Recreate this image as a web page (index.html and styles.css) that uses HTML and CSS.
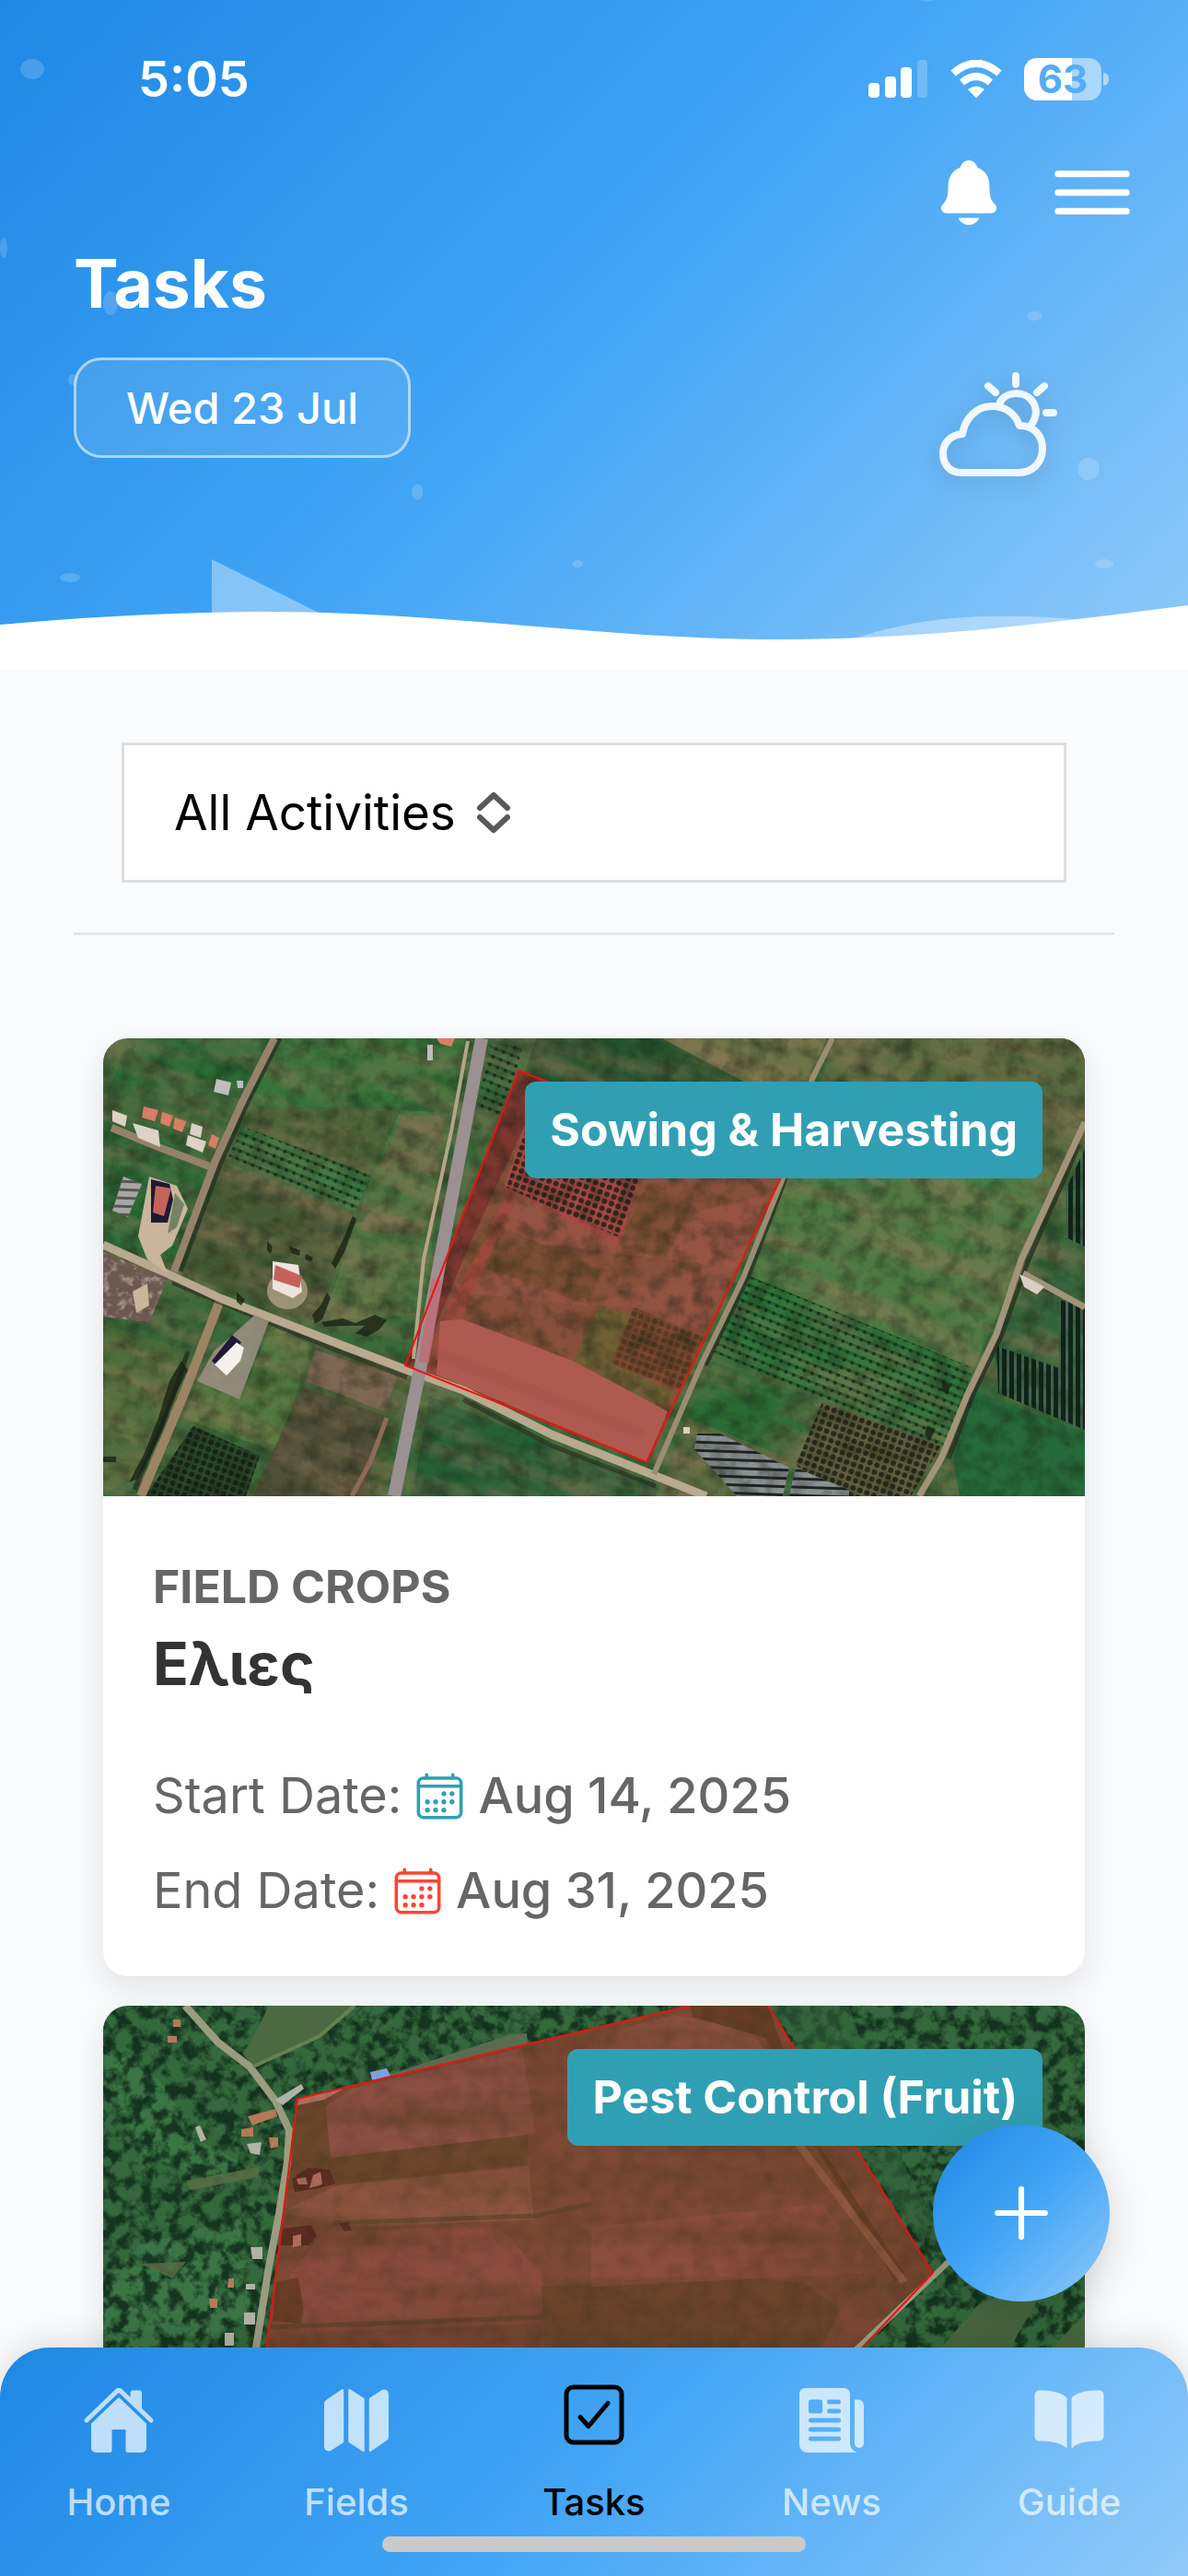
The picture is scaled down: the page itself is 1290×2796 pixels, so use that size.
FILE: index.html
```html
<!DOCTYPE html>
<html lang="en">
<head>
  <meta charset="UTF-8" />
  <meta name="viewport" content="width=device-width, initial-scale=1.0" />
  <title>Tasks</title>
  <link rel="stylesheet" href="styles.css">
</head>
<body>
  <div class="app">
    <header class="header">
      <svg class="header-art" viewBox="0 0 1290 727" preserveAspectRatio="none" aria-hidden="true">
        <g fill="#fff" fill-opacity=".17">
          <ellipse cx="35" cy="75" rx="13" ry="11" />
          <ellipse cx="4" cy="269" rx="4" ry="11" />
          <ellipse cx="120" cy="329" rx="8" ry="13" />
          <ellipse cx="79" cy="412" rx="5" ry="6" />
          <ellipse cx="453" cy="534" rx="6" ry="9" />
          <ellipse cx="76" cy="627" rx="11" ry="5" />
          <ellipse cx="627" cy="612" rx="6" ry="4" />
          <ellipse cx="1007" cy="-1" rx="8" ry="3" />
          <ellipse cx="1123" cy="343" rx="8" ry="5" />
          <ellipse cx="1182" cy="509" rx="12" ry="12" />
          <ellipse cx="1199" cy="612" rx="10" ry="5" />
        </g>
        <path fill="#fff" fill-opacity=".37" d="M230 607L350 667V700H230zM925 694C985 674 1050 662 1180 673V700z" />
        <path fill="#fff" d="M0 678C90 670 190 664 290 664C480 664 660 694 842 694C1010 694 1150 675 1290 657V727H0z" />
      </svg>

      <div class="status-bar">
        <span>5:05</span>
        <div class="status-icons">
          <svg width="65" height="42" viewBox="0 0 65 42" fill="#fff">
            <rect x="0" y="25" width="12" height="16" rx="4" />
            <rect x="18" y="18" width="12" height="23" rx="4" />
            <rect x="35" y="8" width="12" height="33" rx="4" />
            <rect x="53" y="0" width="11" height="41" rx="4" opacity=".22" />
          </svg>
          <svg width="56" height="42" viewBox="0 0 56 42" fill="none" stroke="#fff" stroke-width="8">
            <path d="M3 14.500Q28-7 53 14.500M12.500 24.500Q28 11.500 43.500 24.500" />
            <path d="M19 32Q28 25 37 32L28 41.500z" fill="#fff" stroke="none" />
          </svg>
          <div class="battery">
            <span class="battery-level">63</span>
          </div>
        </div>
      </div>

      <div class="header-actions">
        <button class="icon-button" aria-label="Notifications">
          <svg width="80" height="80" viewBox="0 0 512 512" fill="#fff">
            <path d="M440.080 341.310c-1.660-2-3.290-4-4.890-5.930-22-26.610-35.310-42.670-35.310-118 0-39-9.330-71-27.720-95-13.560-17.730-31.890-31.180-56.050-41.120a3 3 0 0 1-.820-.670C306.600 51.490 282.820 32 256 32s-50.590 19.490-59.280 48.560a3.130 3.130 0 0 1-.810.650c-56.380 23.210-83.780 67.740-83.780 136.140 0 75.360-13.290 91.420-35.310 118-1.600 1.930-3.230 3.890-4.890 5.930a35.160 35.160 0 0 0-4.650 37.620c6.170 13 19.320 21.070 34.330 21.070H410.500c14.940 0 28-8.060 34.190-21a35.170 35.170 0 0 0-4.610-37.660zM256 480a80.060 80.060 0 0 0 70.440-42.130 4 4 0 0 0-3.540-5.870H189.120a4 4 0 0 0-3.550 5.870A80.060 80.060 0 0 0 256 480z" />
          </svg>
        </button>
        <button class="icon-button" aria-label="Menu">
          <svg width="108" height="108" viewBox="0 0 512 512" fill="none" stroke="#fff" stroke-width="34" stroke-linecap="round">
            <path d="M80 160h352M80 256h352M80 352h352" />
          </svg>
        </button>
      </div>

      <h1>Tasks</h1>
      <div class="header-row">
        <button class="date-button">Wed 23 Jul</button>
        <svg class="weather" width="128" height="114" viewBox="0 0 128 114" fill="none" stroke="#f0f7fe" stroke-width="8" stroke-linecap="round" stroke-linejoin="round">
          <path d="M24 109C11 109 4 100 4 88C4 77 12 68 25 67C28 50 40 37 57 37C71 37 82 44 87 58C103 58 112 69 112 83C112 98 101 109 86 109z" />
          <path d="M65 35C70 20 94 19 102 33C107 41 105 52 98 59M83 4v9M53 15l8 7M114 15l-8 7M116 44h8" />
        </svg>
      </div>
    </header>

    <main class="content">
      <div class="filter">
        <select class="filter-select" aria-label="Activity">
          <option>All Activities</option>
          <option>Sowing</option>
          <option>Pest Control</option>
        </select>
        <svg class="filter-arrows" width="38" height="46" viewBox="0 0 38 46" fill="none" stroke="#595959" stroke-width="6" stroke-linecap="round" stroke-linejoin="round">
          <path d="M4 18L19 4L34 18M4 28L19 42L34 28" />
        </svg>
      </div>
      <hr class="divider" />

      <section class="cards">
        <article class="card">
          <div class="map-wrap">
            <svg class="map" viewBox="0 0 1066 497" preserveAspectRatio="xMidYMid slice" role="img" aria-label="Field map">
              <defs>
                <pattern id="rows" width="9" height="9" patternUnits="userSpaceOnUse" patternTransform="rotate(22)">
                  <rect y="2" width="9" height="3" fill="#173d20" opacity=".45" />
                  <circle cx="4" cy="4" r="2" fill="#10281a" opacity=".8" />
                </pattern>
                <pattern id="trees" width="8" height="8" patternUnits="userSpaceOnUse" patternTransform="rotate(20)">
                  <circle cx="4" cy="4" r="3" fill="#15170f" opacity=".75" />
                </pattern>
                <pattern id="panels" width="8" height="8" patternUnits="userSpaceOnUse">
                  <rect width="5" height="8" fill="#10231a" />
                </pattern>
                <pattern id="sheds" width="9" height="9" patternUnits="userSpaceOnUse" patternTransform="rotate(2)">
                  <rect width="9" height="3" fill="#1f2423" />
                </pattern>
                <filter id="soil" x="0" y="0" width="100%" height="100%" color-interpolation-filters="sRGB">
                  <feTurbulence type="fractalNoise" baseFrequency=".009 .04" numOctaves="4" seed="8" />
                  <feColorMatrix values="0 0 0 0 .6  0 0 0 0 .48  0 0 0 0 .36  2.600 0 0 0 -.900" />
                </filter>
                <filter id="grain" x="0" y="0" width="100%" height="100%" color-interpolation-filters="sRGB">
                  <feTurbulence type="fractalNoise" baseFrequency=".05" numOctaves="5" seed="3" />
                  <feColorMatrix values="0 0 0 0 .08  0 0 0 0 .12  0 0 0 0 .06  0 1.400 0 0 -.550" />
                </filter>
                <filter id="yard" x="0" y="0" width="100%" height="100%" color-interpolation-filters="sRGB">
                  <feTurbulence type="fractalNoise" baseFrequency=".12" numOctaves="3" seed="5" />
                  <feColorMatrix values="0 0 0 0 .75  0 0 0 0 .68  0 0 0 0 .62  3 0 0 0 -1.500" />
                  <feComposite in2="SourceGraphic" operator="in" />
                </filter>
                <clipPath id="plot1"><path d="M451 35L738 147L590 460L328 355z" /></clipPath>
                <clipPath id="frame1"><rect width="1066" height="497" /></clipPath>
              </defs>
              <g clip-path="url(#frame1)">
              <rect width="1066" height="497" fill="#3b6a3a" />
              <!-- fields west of the main road -->
              <path fill="#2a6b36" d="M27 0H186L150 65L9 50zM0 80L118 140L80 235L66 250L0 220z" />
              <path fill="#36743a" d="M187 0H395L384 74H159z" />
              <path fill="#4c6539" d="M156 77H320L291 148L152 95z" />
              <path fill="#3b7740" d="M152 96L291 148L273 189L136 128z" />
              <path fill="#455b35" d="M131 137L273 191L234 307L180 297L86 253z" />
              <path fill="#4f7441" d="M323 78L378 81L362 192L345 300L238 307L291 152z" />
              <path fill="#826c51" d="M325 84L372 84L362 150L300 140zM288 190L352 196L348 212L280 208z" opacity=".5" />
              <path fill="#4b6d3a" d="M0 311L91 338L45 466L0 497z" />
              <path fill="#51783f" d="M184 311L227 334L188 449L87 412L102 375L148 392z" />
              <path fill="#446035" d="M232 334L330 370L305 497H156L188 449z" />
              <path fill="#4f4f37" d="M216 378L305 409L284 497H163z" />
              <path fill="#275f36" d="M355 388L547 466L640 497H335z" />
              <!-- fields east -->
              <path fill="#27552f" d="M470 0H650L720 60H450z" />
              <path fill="#6c7448" d="M607 0H785L765 60H720z" />
              <path fill="#566b3f" d="M795 0H1066V110L1000 240L738 152z" />
              <path fill="#4d7a43" d="M738 152L1032 150L995 245L945 358L699 257z" />
              <path fill="#2f7539" d="M699 257L945 358L913 446L663 341z" />
              <path fill="#2a6b34" d="M660 351L777 392L745 456L635 412z" />
              <path fill="#55693e" d="M635 412L745 456L738 497H600z" />
              <path fill="#31643a" d="M1028 210L1066 226V425L972 385L960 350z" />
              <rect x="-150" y="-350" width="1400" height="1200" filter="url(#soil)" opacity=".45" transform="rotate(20 533 248)" />
              <path fill="url(#rows)" d="M152 96L291 148L273 189L136 128zM699 257L945 358L913 446L663 341zM421 5L455 10L436 85L405 78z" />
              <path fill="#615f40" d="M781 395L910 442L877 497H799L752 463z" />
              <path fill="url(#trees)" d="M781 395L910 442L877 497H799L752 463z" />
              <path fill="#28492a" d="M98 421L170 453L155 497H46z" />
              <path fill="url(#trees)" d="M98 421L170 453L155 497H46z" />
              <path fill="#7e6853" d="M230 338L320 368L305 405L220 372z" />
              <path fill="#8b9092" d="M645 429H670L745 466L738 497H688L642 446zM752 466L810 490V497H745z" />
              <path fill="url(#sheds)" d="M645 429H670L745 466L738 497H688L642 446zM752 466L810 490V497H745z" />
              <path fill="#42664a" d="M970 334L1038 358V284L1066 290V425L972 385zM1045 165L1066 120V226L1045 216z" />
              <path fill="url(#panels)" d="M970 334L1038 358V284L1066 290V425L972 385zM1045 165L1066 120V226L1045 216z" />
              <path fill="#276a3a" d="M945 382L1066 428V497H930L922 450z" />
              <!-- selected plot -->
              <g clip-path="url(#plot1)">
                <rect x="320" y="30" width="430" height="440" fill="#87503a" />
                <path fill="#a1584a" d="M445 160L560 210L720 170L690 250L415 215z" opacity=".55" />
                <path fill="#9e564a" d="M400 245L530 290L580 270L690 240L650 320L576 292L520 290L380 275z" opacity=".5" />
                <path fill="#6f4c2b" d="M420 200L540 250L530 285L385 240zM590 160L640 180L610 240L560 225z" opacity=".5" />
                <path fill="#74262a" d="M451 35L480 46L395 230L350 340L330 355z" opacity=".6" />
                <path fill="#9c4a3c" d="M468 100L445 150L420 210L375 290L350 360L362 362L395 290L445 180z" />
                <path fill="#a44b45" d="M470 60L600 100L583 152L560 226L435 162z" />
                <path fill="url(#trees)" d="M470 60L600 100L583 152L560 216L438 162z" />
                <path fill="#705f35" d="M537 292L576 300L551 353L620 384L610 402L510 352z" />
                <path fill="#7b4a30" d="M576 292L651 324L627 382L551 353z" />
                <path fill="url(#trees)" opacity=".4" d="M576 292L651 324L627 382L551 353z" />
              </g>
              <rect width="1066" height="497" filter="url(#grain)" opacity=".7" />
              <path fill="#af5a51" d="M366 307L390 305L510 350L613 405L590 460L362 365z" />
              <path fill="#a3524a" opacity=".5" d="M362 335L590 425L584 436L360 348z" />
              <!-- roads -->
              <g fill="none" stroke-linejoin="round">
                <path stroke="#1f2a1c" stroke-width="5" opacity=".7" d="M192 0L158 67L128 135L84 253M92 340L74 395L34 490M1060 115L1005 240L976 321L944 388L918 456M774 70L741 152L700 260L654 355" />
                <path stroke="#96826a" stroke-width="8" d="M186 0L152 67L121 135L77 253M9 97L60 118L118 140" />
                <path stroke="#9c8464" stroke-width="10" d="M127 284L87 388L41 497" />
                <path stroke="#2a2a1e" stroke-width="5" opacity=".6" d="M75 265L259 341L330 368M391 392L487 442L600 486" />
                <path stroke="#b9a98f" stroke-width="9" d="M0 224L73 257L127 282L259 333L330 360L391 382L487 430L595 473L655 497" />
                <path stroke="#b3a588" stroke-width="4" d="M396 3L378 101L348 240L337 348" />
                <path stroke="#9b9092" stroke-width="14" d="M411 0L387 128L366 240L345 355L316 497" />
                <path stroke="#9b8c72" stroke-width="6" d="M792 0L770 44L738 152L695 260L649 355L598 473" />
                <path stroke="#a39379" stroke-width="7" d="M1066 91L997 240L970 321L938 388L910 456L886 497M999 255L1066 292" />
                <path stroke="#8e6a5a" stroke-width="5" d="M308 412L290 460L270 497" />
                <path stroke="#c8606a" stroke-width="12" opacity=".6" d="M363 262L356 305L348 352" />
              </g>
              <!-- hedges -->
              <g fill="#16200f" opacity=".75">
                <path d="M271 193L275 196L262 232L252 250L248 244L262 215zM243 276L247 282L238 305L230 310L227 300L236 290z" />
                <path d="M237 308L260 304L274 309L295 300L308 306L300 316L286 324L274 320L284 312L262 312L240 313zM202 226L214 230L213 236L204 233zM220 234L228 238L226 242L219 240zM178 220L184 226L182 234L178 230zM145 275L154 284L150 290L145 286z" />
                <path d="M85 350L92 360L76 392L64 425L52 452L38 478L28 482L44 452L60 412L72 372zM912 370L920 378L916 386L910 382zM895 420L904 424L898 436L892 430zM0 454H14V460H0z" />
              </g>
              <!-- buildings -->
              <path fill="#9c9084" d="M165 300L180 307L148 392L102 372L120 340z" opacity=".85" />
              <path fill="#c9b69a" d="M38 215L50 150L80 160L92 185L75 225L62 235L70 255L48 240z" />
              <path fill="#3d6141" d="M78 168L88 180L80 205L70 212z" opacity=".6" />
              <path fill="#1e1a35" d="M52 153L72 158L76 175L70 200H52z" />
              <path fill="#c4655b" d="M57 160L74 163L66 193L54 189z" />
              <path fill="#a9a5a1" d="M22 150L42 158L27 194L10 187z" />
              <path fill="url(#sheds)" d="M22 150L42 158L27 194L10 187z" opacity=".6" />
              <path fill="#6b5950" d="M0 232L70 260L50 308L0 302z" />
              <path filter="url(#yard)" opacity=".8" d="M0 232L70 260L50 308L0 302z" />
              <path fill="#c9b59a" d="M32 275L48 266L50 290L36 298z" />
              <ellipse cx="200" cy="274" rx="22" ry="20" fill="#9c9275" />
              <path fill="#eee4df" d="M184 242L212 246L216 275L206 282L184 272z" />
              <path fill="#c4625a" d="M187 246L216 258L213 271L185 262z" />
              <path fill="#1e1a35" d="M118 350L140 322L150 330L126 358z" />
              <path fill="#f4f0ec" d="M121 354L145 330L153 336L149 350L134 366z" />
              <path fill="#c0bdba" d="M123 44L139 48L136 62L120 58zM145 46H152V54H146zM352 7H358V24H352z" />
              <path fill="#ddd2c4" d="M10 78L26 84L24 96L10 90zM32 92L60 100L62 118L38 108zM92 105L112 112L108 124L90 116z" />
              <path fill="#d87d68" d="M44 74L60 78L56 90L42 86zM64 80L76 84L72 96L62 92zM78 86L90 90L86 102L76 98zM118 104L126 108L122 120L114 116zM362 0H382L378 9L366 6z" />
              <path fill="#d9cfc3" d="M96 92L108 96L106 108L94 104zM995 256L1012 264L1022 270L1014 278L1000 270zM630 422H637V429H630z" />
              <path fill="none" stroke="#f11015" stroke-width="2" d="M451 35L738 147L590 460L328 355z" />
              </g>
            </svg>
            <span class="badge">Sowing &amp; Harvesting</span>
          </div>
          <div class="card-body">
            <p class="crop-type">FIELD CROPS</p>
            <h2>Ελιες</h2>
            <div class="dates">
              <p class="date-row">
                <span>Start Date:</span>
                <svg class="cal cal-start" viewBox="0 0 512 512"><use href="#calendar" /></svg>
                <time datetime="2025-08-14">Aug 14, 2025</time>
              </p>
              <p class="date-row">
                <span>End Date:</span>
                <svg class="cal cal-end" viewBox="0 0 512 512"><use href="#calendar" /></svg>
                <time datetime="2025-08-31">Aug 31, 2025</time>
              </p>
            </div>
          </div>
        </article>

        <article class="card">
          <div class="map-wrap">
            <svg class="map" viewBox="0 0 1066 497" preserveAspectRatio="xMidYMid slice" role="img" aria-label="Field map">
              <defs>
                <filter id="forest" x="0" y="0" width="100%" height="100%" color-interpolation-filters="sRGB">
                  <feTurbulence type="fractalNoise" baseFrequency=".07" numOctaves="5" seed="12" />
                  <feColorMatrix values="0 0 0 0 .06  0 0 0 0 .17  0 0 0 0 .1  0 4 0 0 -1.650" />
                </filter>
                <filter id="stripes" x="0" y="0" width="100%" height="100%" color-interpolation-filters="sRGB">
                  <feTurbulence type="fractalNoise" baseFrequency=".003 .03" numOctaves="4" seed="4" />
                  <feColorMatrix values="0 0 0 0 .4  0 0 0 0 .26  0 0 0 0 .16  2.500 0 0 0 -1" />
                </filter>
                <clipPath id="plot2"><path d="M211 101L637 0H722L901 290L705 497H162z" /></clipPath>
              </defs>
              <rect width="1066" height="497" fill="#35683d" />
              <path fill="#3f7a48" d="M0 40L60 80L110 150L150 170L120 190L40 160L0 60zM40 260L150 230L160 330L100 371H0V300z" opacity=".7" />
              <rect width="1066" height="497" filter="url(#forest)" opacity=".85" />
              <path fill="#4b6a42" d="M180 0H273L235 35L163 66L152 52L165 30z" />
              <path fill="#34633c" d="M722 0H810L830 60L760 50zM815 150L860 155L900 230L890 260z" opacity=".5" />
              <path fill="#46673f" d="M910 371L950 325L1010 300L1020 310L985 371zM1030 371L1066 335V371z" />
              <path fill="#5b6e45" d="M90 190L170 175L168 186L95 200zM40 280L90 278L75 296z" opacity=".8" />
              <path fill="#5b6b50" d="M310 75L440 32L460 30L462 50L330 80z" />
              <g clip-path="url(#plot2)">
                <rect x="150" width="760" height="497" fill="#7d4935" />
                <path fill="#8b5042" d="M240 110L270 90L455 46L470 140L247 165z" />
                <path fill="#6c472c" d="M205 105L240 95L247 165L462 140L460 172L200 200z" />
                <path fill="#8d5540" d="M255 195L462 174L468 232L280 240L190 225z" />
                <path fill="#8b4c3e" d="M240 245L430 240L475 290L480 345L215 355L190 310z" />
                <path fill="#6c452c" d="M476 305L640 292L760 300L800 330L780 371H480z" />
                <path fill="#8b5240" d="M540 30L620 10L700 25L725 55L720 130L540 90z" opacity=".8" />
                <path fill="#945042" d="M530 240L780 215L840 290L530 305z" opacity=".6" />
                <rect x="150" width="760" height="497" filter="url(#stripes)" opacity=".6" />
                <path fill="#613c22" d="M637 0H722L770 140L870 290L860 300L790 180L740 100L720 35L640 12z" opacity=".8" />
                <path fill="none" stroke="#9a6046" stroke-width="8" opacity=".6" d="M755 150L870 300" />
                <path fill="none" stroke="#5a412a" stroke-width="5" opacity=".6" d="M180 349L480 338M250 236L470 228L530 215" />
                <path fill="#5b2d20" d="M205 188L222 176L246 178L252 193L235 198L208 202zM195 242L226 238L232 250L224 260H192zM256 236L266 235L270 244L262 245z" />
                <path fill="#b5705f" d="M210 188L220 186L222 194H212zM228 184L236 180L238 194L224 198zM206 250L215 248V260L206 262zM211 101L268 86L240 102L211 108z" />
                <path fill="#5b3519" d="M188 300L212 295L218 330L214 345L184 342z" opacity=".6" />
                <rect x="150" width="760" height="497" filter="url(#grain)" opacity=".25" />
              </g>
              <g fill="none" stroke-linejoin="round">
                <path stroke="#9a9c80" stroke-width="8" d="M89 0L125 40L159 66L187 103L202 135L200 170L191 226L180 283L166 371L150 497" />
                <path stroke="#66804f" stroke-width="4" d="M163 66L235 33L273 0" />
                <path stroke="#9c9c84" stroke-width="6" d="M918 278L805 385" />
              </g>
              <path fill="#b5785a" d="M157 120L187 112L189 120L162 130zM150 134L163 132V142H150zM180 143H190V153L182 155zM76 15H84V23H76zM70 33H80V40H70zM115 318H124V328H116zM136 296H142V306H135z" />
              <path fill="#b0b3a6" d="M156 150L172 148L170 162L160 160zM160 262H173V275H162zM155 302H165V308H155zM153 333H165V346H153zM132 355H142V369H132zM100 132L105 130L112 145L106 148zM187 102L215 85L218 90L195 108z" />
              <path fill="#7f9fdc" d="M290 72L308 68L312 76L292 81z" />
              <path fill="none" stroke="#e81414" stroke-width="2" d="M637 0L211 101L162 497H705L901 290L722 0" />
            </svg>
            <span class="badge">Pest Control (Fruit)</span>
          </div>
        </article>
      </section>
    </main>

    <button class="fab" aria-label="Add task">
      <svg width="92" height="92" viewBox="0 0 512 512" fill="none" stroke="#fff" stroke-width="34" stroke-linecap="round">
        <path d="M256 112v288M400 256H112" />
      </svg>
    </button>

    <nav class="tab-bar">
      <div class="tabs">
        <a href="#" class="tab">
          <svg class="tab-icon" viewBox="0 0 512 512">
            <path d="M261.560 101.280a8 8 0 0 0-11.060 0L66.400 277.150a8 8 0 0 0-2.470 5.790L63.900 448a32 32 0 0 0 32 32H192a16 16 0 0 0 16-16V328a8 8 0 0 1 8-8h80a8 8 0 0 1 8 8v136a16 16 0 0 0 16 16h96.060a32 32 0 0 0 32-32V282.940a8 8 0 0 0-2.470-5.790z" />
            <path d="M490.910 244.150l-74.800-71.560V64a16 16 0 0 0-16-16h-48a16 16 0 0 0-16 16v32l-57.920-55.380C272.770 35.140 264.710 32 256 32c-8.680 0-16.720 3.140-22.140 8.630l-212.700 203.500c-6.220 6-7 15.870-1.340 22.370A16 16 0 0 0 43 267.560L250.500 69.280a8 8 0 0 1 11.060 0l207.520 198.280a16 16 0 0 0 22.590-.440c6.140-6.360 5.630-16.860-.760-22.970z" />
          </svg>
          <span>Home</span>
        </a>
        <a href="#" class="tab">
          <svg class="tab-icon" viewBox="0 0 512 512">
            <path d="M48.170 113.340A32 32 0 0 0 32 141.240V438a32 32 0 0 0 47 28.370c.430-.230.850-.470 1.260-.740l84.140-55.050a8 8 0 0 0 3.630-6.720V46.450a8 8 0 0 0-12.510-6.630zM212.360 39.310A8 8 0 0 0 200 46v357.560a8 8 0 0 0 3.630 6.720l96 62.420A8 8 0 0 0 312 466V108.670a8 8 0 0 0-3.640-6.730zM464.530 46.470a31.640 31.640 0 0 0-31.500-.880 12.070 12.070 0 0 0-1.250.740l-84.150 55a8 8 0 0 0-3.630 6.720v357.460a8 8 0 0 0 12.520 6.630l107.070-73.460a32 32 0 0 0 16.410-28v-296a32.760 32.760 0 0 0-15.470-28.210z" />
          </svg>
          <span>Fields</span>
        </a>
        <a href="#" class="tab active" aria-current="page">
          <svg class="tab-icon tab-icon-line" viewBox="0 0 512 512">
            <path d="M352 176L217.600 336 160 272" />
            <rect x="64" y="64" width="384" height="384" rx="48" />
          </svg>
          <span>Tasks</span>
        </a>
        <a href="#" class="tab">
          <svg class="tab-icon" viewBox="0 0 512 512">
            <path d="M439.910 112h-23.910v304a32 32 0 0 0 64 0V152.090A40.090 40.090 0 0 0 439.910 112z" />
            <path fill-rule="evenodd" d="M384 416V72a40 40 0 0 0-40-40H72a40 40 0 0 0-40 40v352a56 56 0 0 0 56 56h342.850a1.140 1.140 0 0 0 .300-2.250A64.110 64.110 0 0 1 384 416zM96 128a16 16 0 0 1 16-16h64a16 16 0 0 1 16 16v64a16 16 0 0 1-16 16h-64a16 16 0 0 1-16-16zM304 400H112a16 16 0 0 1 0-32h192a16 16 0 0 1 0 32zm0-64H112a16 16 0 0 1 0-32h192a16 16 0 0 1 0 32zm0-64H112a16 16 0 0 1 0-32h192a16 16 0 0 1 0 32zm0-64h-64a16 16 0 0 1 0-32h64a16 16 0 0 1 0 32zm0-64h-64a16 16 0 0 1 0-32h64a16 16 0 0 1 0 32z" />
          </svg>
          <span>News</span>
        </a>
        <a href="#" class="tab">
          <svg class="tab-icon" viewBox="0 0 512 512">
            <path d="M202.240 74C166.110 56.750 115.610 48.300 48 48a31.360 31.360 0 0 0-17.920 5.330A32 32 0 0 0 16 79.900V366c0 19.340 13.760 33.930 32 33.930 71.070 0 142.360 6.640 185.060 47a4.110 4.110 0 0 0 6.940-3V106.820a15.890 15.890 0 0 0-5.460-12A143 143 0 0 0 202.240 74zM481.920 53.300A31.330 31.330 0 0 0 464 48c-67.610.300-118.110 8.710-154.240 26a143.310 143.310 0 0 0-32.310 20.780 15.930 15.930 0 0 0-5.450 12v337.130a3.930 3.930 0 0 0 6.680 2.810c25.670-25.500 70.720-46.820 185.360-46.810a32 32 0 0 0 32-32v-288a32 32 0 0 0-14.120-26.610z" />
          </svg>
          <span>Guide</span>
        </a>
      </div>
      <div class="home-indicator"></div>
    </nav>
  </div>

  <!-- shared icons -->
  <svg width="0" height="0" class="sprite" aria-hidden="true">
    <symbol id="calendar" viewBox="0 0 512 512">
      <g fill="none" stroke="currentColor" stroke-width="32" stroke-linecap="round" stroke-linejoin="round">
        <rect x="48" y="80" width="416" height="384" rx="48" />
        <path d="M128 48v32M384 48v32M464 160H48" />
      </g>
      <g fill="currentColor">
        <circle cx="296" cy="232" r="24" /><circle cx="376" cy="232" r="24" />
        <circle cx="136" cy="312" r="24" /><circle cx="216" cy="312" r="24" />
        <circle cx="296" cy="312" r="24" /><circle cx="376" cy="312" r="24" />
        <circle cx="136" cy="392" r="24" /><circle cx="216" cy="392" r="24" />
        <circle cx="296" cy="392" r="24" />
      </g>
    </symbol>
  </svg>
</body>
</html>
```

FILE: styles.css
```css
* {
  box-sizing: border-box;
  margin: 0;
  padding: 0;
}
body {
  font-family: Inter, "Liberation Sans", sans-serif;
  background: #fafbfd;
  color: #666;
}
button {
  border: none;
  background: none;
  color: inherit;
  font-family: inherit;
  cursor: pointer;
}
.sprite {
  position: absolute;
}
.app {
  position: relative;
  display: flex;
  flex-direction: column;
  height: 100vh;
  overflow: hidden;
}

/* header */
.header {
  position: relative;
  flex: none;
  padding: 58px 80px 209px;
  background: linear-gradient(135deg, #1e88e5 0%, #42a5f5 50%, #90caf9 100%);
  color: #fff;
}
.header-art {
  position: absolute;
  top: 0;
  left: 0;
  width: 100%;
  height: 100%;
}
.status-bar {
  display: flex;
  justify-content: space-between;
  align-items: center;
  padding: 0 6px 0 70px;
  font-size: 54px;
  line-height: 56px;
  font-weight: 600;
}
.status-icons {
  display: flex;
  align-items: center;
  gap: 24px;
}
.battery {
  position: relative;
  width: 84px;
  height: 46px;
  margin-right: 8px;
  border-radius: 14px;
  background: linear-gradient(90deg, #fff 62%, rgba(255,255,255,0.5) 62%);
  text-align: center;
}
.battery::after {
  content: "";
  position: absolute;
  right: -8px;
  top: 16px;
  width: 6px;
  height: 14px;
  border-radius: 0 7px 7px 0;
  background: rgba(255,255,255,0.5);
}
.battery-level {
  display: block;
  font-size: 42px;
  line-height: 46px;
  font-weight: 700;
  color: #55acf6;
}
.header-actions {
  display: flex;
  justify-content: flex-end;
  align-items: center;
  gap: 40px;
  height: 80px;
  margin: 55px -30px 0 0;
}
.icon-button svg {
  display: block;
}
.header h1 {
  position: relative;
  margin-top: 19px;
  font-size: 73px;
  line-height: 80px;
  font-weight: 700;
}
.header-row {
  position: relative;
  display: flex;
  justify-content: space-between;
  align-items: flex-start;
  margin-top: 40px;
}
.date-button {
  padding: 0 54px;
  border: 3px solid rgba(255,255,255,0.55);
  border-radius: 30px;
  background: rgba(255,255,255,0.1);
  font-size: 47px;
  line-height: 103px;
  font-weight: 500;
}
.weather {
  margin: 16px 62px 0 0;
  filter: drop-shadow(0 6px 12px rgba(0,0,0,0.15));
}

/* content */
.content {
  flex: 1;
  min-height: 0;
  padding: 79px 80px 0;
  overflow-y: auto;
  scrollbar-width: none;
}
.filter {
  display: flex;
  align-items: center;
  height: 152px;
  margin: 0 52px;
  padding: 0 54px;
  border: 3px solid #dcdede;
  background: #fff;
}
.filter-select {
  appearance: none;
  border: none;
  background: transparent;
  color: #000;
  font-family: inherit;
  font-size: 53px;
  line-height: 72px;
}
.filter-arrows {
  margin-left: 20px;
}
.divider {
  height: 3px;
  margin: 54px 0 112px;
  border: none;
  background: #e3e4e6;
}
.cards {
  display: flex;
  flex-direction: column;
  gap: 32px;
  margin: 0 32px;
}
.card {
  border-radius: 27px;
  background: #fff;
  box-shadow: 0 12px 36px rgba(0,0,0,0.1);
}
.map-wrap {
  position: relative;
}
.map {
  display: block;
  width: 100%;
  height: 497px;
  border-radius: 27px 27px 0 0;
}
.badge {
  position: absolute;
  top: 47px;
  right: 46px;
  padding: 0 27px;
  border-radius: 12px;
  background: #319fb3;
  color: #fff;
  font-size: 50px;
  line-height: 105px;
  font-weight: 700;
}
.card-body {
  padding: 68px 54px 57px;
}
.crop-type {
  font-size: 50px;
  line-height: 60px;
  font-weight: 700;
}
.card h2 {
  margin-top: 14px;
  font-size: 64px;
  line-height: 80px;
  font-weight: 700;
  color: #333;
}
.dates {
  display: flex;
  flex-direction: column;
  gap: 31px;
  margin-top: 67px;
}
.date-row {
  display: flex;
  align-items: center;
  gap: 13px;
  font-size: 54px;
  line-height: 72px;
}
.date-row time {
  font-weight: 500;
}
.cal {
  width: 57px;
  height: 57px;
}
.cal-start {
  color: #319fb3;
}
.cal-end {
  color: #ff4433;
}

/* floating button */
.fab {
  position: absolute;
  right: 85px;
  bottom: 298px;
  display: flex;
  align-items: center;
  justify-content: center;
  width: 192px;
  height: 192px;
  border-radius: 50%;
  background: linear-gradient(135deg, #1e88e5 0%, #42a5f5 50%, #90caf9 100%);
  box-shadow: 0 12px 48px rgba(0,0,0,0.15);
}

/* bottom tabs */
.tab-bar {
  position: relative;
  flex: none;
  padding: 39px 0 26px;
  border-radius: 54px 54px 0 0;
  background: linear-gradient(135deg, #1e88e5 0%, #42a5f5 50%, #90caf9 100%);
  box-shadow: 0 -6px 36px rgba(0,0,0,0.12);
}
.tabs {
  display: flex;
}
.tab {
  display: flex;
  flex: 1;
  flex-direction: column;
  align-items: center;
  gap: 25px;
  color: rgba(255,255,255,0.7);
  font-size: 40px;
  line-height: 48px;
  font-weight: 500;
  text-decoration: none;
}
.tab.active {
  color: #000;
}
.tab-icon {
  width: 80px;
  height: 80px;
  fill: currentColor;
}
.tab-icon-line {
  fill: none;
  stroke: currentColor;
  stroke-width: 32;
  stroke-linecap: round;
  stroke-linejoin: round;
}
.active .tab-icon {
  margin: -6px 0 6px;
}
.home-indicator {
  width: 460px;
  height: 17px;
  margin: 13px auto 0;
  border-radius: 9px;
  background: #cacaca;
}
```
